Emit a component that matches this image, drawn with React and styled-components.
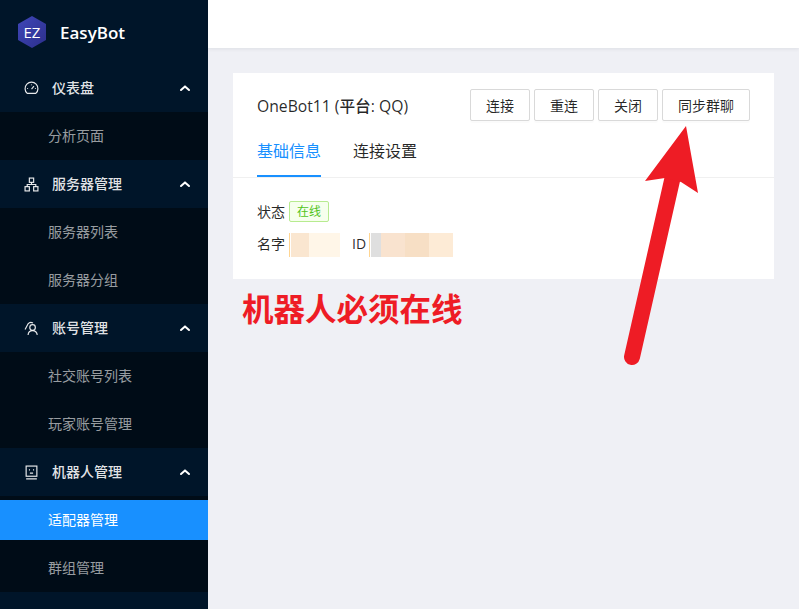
import React from 'react'
import styled, { createGlobalStyle } from 'styled-components'

const GlobalStyle = createGlobalStyle`
  html, body {
    margin: 0;
    padding: 0;
    height: 100%;
  }
  body {
    font-family: "Open Sans", "Noto Sans CJK SC", sans-serif;
    font-size: 14px;
    color: rgba(0, 0, 0, 0.85);
  }
`

const Layout = styled.div`
  display: flex;
  width: 799px;
  height: 609px;
  overflow: hidden;
  background: #eff0f5;
`

const Sider = styled.aside`
  flex: 0 0 208px;
  background: #001529;
  display: flex;
  flex-direction: column;
`

const Brand = styled.div`
  height: 64px;
  display: flex;
  align-items: center;
  padding-left: 17px;
  gap: 13px;
  color: #fff;
  font-size: 17px;
  font-weight: 600;
`

const GroupHead = styled.div`
  height: 48px;
  display: flex;
  align-items: center;
  padding: 0 17px 0 24px;
  gap: 13px;
  color: rgba(255, 255, 255, 0.9);
`

const GroupLabel = styled.span`
  flex: 1;
  font-weight: 500;
  padding-bottom: 2px;
`

const SubList = styled.div`
  background: #000c17;
  display: flex;
  flex-direction: column;
`

const SubItem = styled.div`
  height: ${p => (p.$active ? '40px' : '48px')};
  margin: ${p => (p.$active ? '4px 0' : '0')};
  box-sizing: border-box;
  padding: 0 0 2px 48px;
  display: flex;
  align-items: center;
  color: ${p => (p.$active ? '#fff' : 'rgba(255, 255, 255, 0.6)')};
  background: ${p => (p.$active ? '#1890ff' : 'transparent')};
`

const Main = styled.main`
  flex: 1;
  display: flex;
  flex-direction: column;
  position: relative;
`

const TopBar = styled.header`
  height: 48px;
  background: #fff;
  box-shadow: 0 1px 4px rgba(0, 21, 41, 0.08);
`

const Content = styled.div`
  padding: 25px 25px 0 25px;
`

const Card = styled.section`
  background: #fff;
`

const CardHead = styled.div`
  padding: 16px 24px 0;
  border-bottom: 1px solid #f0f0f0;
`

const TitleRow = styled.div`
  display: flex;
  align-items: center;
  justify-content: space-between;
  height: 32px;
`

const Title = styled.h2`
  margin: 0;
  font-size: 15.7px;
  font-weight: 500;
  color: rgba(0, 0, 0, 0.85);
`

const Actions = styled.div`
  display: flex;
  gap: 4px;
`

const Btn = styled.button`
  height: 32px;
  padding: 0 15px;
  background: #fff;
  border: 1px solid #d9d9d9;
  border-radius: 2px;
  box-shadow: 0 2px 0 rgba(0, 0, 0, 0.015);
  font: inherit;
  color: rgba(0, 0, 0, 0.85);
`

const Tabs = styled.nav`
  display: flex;
  gap: 32px;
  margin-top: 9px;
`

const Tab = styled.div`
  height: 47px;
  box-sizing: border-box;
  padding-top: 8px;
  font-size: 16px;
  color: ${p => (p.$active ? '#1890ff' : 'rgba(0, 0, 0, 0.85)')};
  border-bottom: 2px solid ${p => (p.$active ? '#1890ff' : 'transparent')};
`

const CardBody = styled.div`
  padding: 22px 24px 0;
  display: flex;
  flex-direction: column;
  gap: 10px;
  height: 101px;
  box-sizing: border-box;
`

const InfoRow = styled.div`
  display: flex;
  align-items: center;
  gap: 4px;
  height: 22px;
`

const Tag = styled.span`
  height: 21px;
  box-sizing: border-box;
  padding: 0 7px;
  display: inline-flex;
  align-items: center;
  font-size: 12px;
  color: #52c41a;
  background: #f6ffed;
  border: 1px solid #b7eb8f;
  border-radius: 2px;
`

const Blur = styled.span`
  display: flex;
  height: 24px;
  margin: 4px ${p => p.$gap || 0}px 0 ${p => p.$lead || 0}px;
  border-left: 1px solid #ffd591;
  padding-left: 1px;
`

const BlurCell = styled.span`
  width: ${p => p.$w}px;
  background: ${p => p.$c};
`

const Note = styled.div`
  margin: 10px 0 0 9px;
  font-family: "Noto Sans CJK SC", sans-serif;
  font-size: 31.5px;
  font-weight: 700;
  line-height: 36px;
  color: #ee1c25;
`

const ArrowMark = styled.svg`
  position: absolute;
  left: 0;
  top: 0;
  width: 591px;
  height: 609px;
  pointer-events: none;
`

const Stroke = styled.svg`
  flex: none;
  width: 15px;
  height: 15px;
  fill: none;
  stroke: currentColor;
  stroke-width: 1.1;
`

const Chevron = () => (
  <svg width="12" height="8" viewBox="0 0 12 8">
    <path d="M2 6 L6 2.4 L10 6" fill="none" stroke="#fff" strokeWidth="2" strokeLinecap="round" strokeLinejoin="round" />
  </svg>
)

const GaugeIcon = () => (
  <Stroke viewBox="0 0 14 14">
    <path d="M3 11.6 A6 6 0 1 1 11 11.6 Z" />
    <path d="M7 7.5 L9.3 4.8" />
    <path d="M3 7 H3.8 M7 3.2 V4 M10.2 7 H11" />
  </Stroke>
)

const ClusterIcon = () => (
  <Stroke viewBox="0 0 14 14">
    <rect x="5" y="1" width="4" height="4" />
    <rect x="1" y="9" width="4" height="4" />
    <rect x="9" y="9" width="4" height="4" />
    <path d="M7 5 V7 M3 9 V7 H11 V9" />
  </Stroke>
)

const AccountIcon = () => (
  <Stroke viewBox="0 0 14 14">
    <circle cx="8" cy="6" r="2.6" />
    <path d="M3.8 13 C4 10.4 5.8 9 8 9 C10.2 9 12 10.4 12.4 13" />
    <path d="M1 8 L3.8 2.6 C4.8 1.4 6.8 1 8.4 1.8" />
  </Stroke>
)

const RobotIcon = () => (
  <Stroke viewBox="0 0 14 14">
    <rect x="2" y="1" width="10" height="9.5" />
    <path d="M2 13 H12 M5.5 7.6 H8.5" />
    <path d="M4.6 4.6 H5.6 M8.4 4.6 H9.4" />
  </Stroke>
)

const Logo = () => (
  <svg width="30" height="32" viewBox="0 0 30 32">
    <defs>
      <linearGradient id="hex" x1="0" y1="0" x2="1" y2="1">
        <stop offset="0" stopColor="#3f46b8" />
        <stop offset="1" stopColor="#2c2f8c" />
      </linearGradient>
    </defs>
    <polygon points="15,0 29,8 29,24 15,32 1,24 1,8" fill="url(#hex)" />
    <text x="15" y="21.5" textAnchor="middle" fill="#fff" fontSize="15" fontWeight="400" fontFamily="Open Sans, sans-serif">EZ</text>
  </svg>
)

const menu = [
  { label: '仪表盘', icon: <GaugeIcon />, items: ['分析页面'] },
  { label: '服务器管理', icon: <ClusterIcon />, items: ['服务器列表', '服务器分组'] },
  { label: '账号管理', icon: <AccountIcon />, items: ['社交账号列表', '玩家账号管理'] },
  { label: '机器人管理', icon: <RobotIcon />, items: ['适配器管理', '群组管理'] },
]

const App = () => {
  return (
    <Layout>
      <GlobalStyle />
      <Sider>
        <Brand>
          <Logo />
          EasyBot
        </Brand>
        {menu.map(group => (
          <div key={group.label}>
            <GroupHead>
              {group.icon}
              <GroupLabel>{group.label}</GroupLabel>
              <Chevron />
            </GroupHead>
            <SubList>
              {group.items.map(item => (
                <SubItem key={item} $active={item === '适配器管理'}>{item}</SubItem>
              ))}
            </SubList>
          </div>
        ))}
      </Sider>
      <Main>
        <TopBar />
        <Content>
          <Card>
            <CardHead>
              <TitleRow>
                <Title>OneBot11 (平台: QQ)</Title>
                <Actions>
                  <Btn>连接</Btn>
                  <Btn>重连</Btn>
                  <Btn>关闭</Btn>
                  <Btn>同步群聊</Btn>
                </Actions>
              </TitleRow>
              <Tabs>
                <Tab $active>基础信息</Tab>
                <Tab>连接设置</Tab>
              </Tabs>
            </CardHead>
            <CardBody>
              <InfoRow>状态 <Tag>在线</Tag></InfoRow>
              <InfoRow>
                名字
                <Blur $gap={8}>
                  <BlurCell $w={18} $c="#fae6d0" />
                  <BlurCell $w={31} $c="#fff6e8" />
                </Blur>
                ID
                <Blur $lead={-1}>
                  <BlurCell $w={10} $c="#dfdfdf" />
                  <BlurCell $w={24} $c="#f9e3cf" />
                  <BlurCell $w={24} $c="#f7dfc5" />
                  <BlurCell $w={24} $c="#fdebd6" />
                </Blur>
              </InfoRow>
            </CardBody>
          </Card>
          <Note>机器人必须在线</Note>
        </Content>
        <ArrowMark viewBox="0 0 591 609">
          <path d="M424 357 L465 176" fill="none" stroke="#ee1c25" strokeWidth="16" strokeLinecap="round" />
          <polygon points="437,181 478,126 490,193 473,182 457,178" fill="#ee1c25" />
        </ArrowMark>
      </Main>
    </Layout>
  )
}

export default App
